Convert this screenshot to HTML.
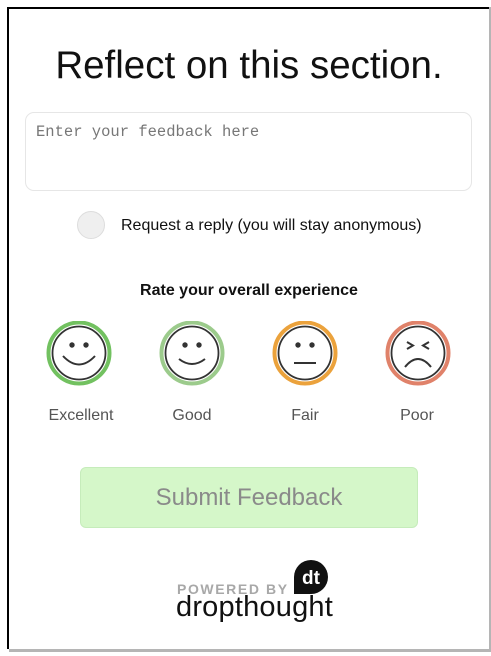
<!DOCTYPE html>
<html><head><style>
body{margin:0;width:491px;height:656px;background:#fff;font-family:"Liberation Sans",sans-serif;position:relative;overflow:hidden}
.frame{position:absolute;left:7px;top:7px;width:482px;height:642px;border-top:2px solid #000;border-left:2px solid #000;box-sizing:border-box}
.rs{position:absolute;left:489px;top:7px;width:2px;height:644px;background:#b5b5b5}
.bs{position:absolute;left:9px;top:649px;width:482px;height:3px;background:#b5b5b5}
h1{position:absolute;top:44px;left:9px;width:480px;margin:0;text-align:center;font-weight:normal;font-size:38.5px;color:#111}
.ta{position:absolute;left:25px;top:112px;width:447px;height:79px;border:1px solid #e6e6e6;border-radius:9px;box-sizing:border-box;font-family:"Liberation Mono",monospace;font-size:15.5px;color:#777;padding:10px 10px}
.cb{position:absolute;left:77px;top:211px;width:28px;height:28px;border-radius:50%;background:#efefef;border:1px solid #ddd;box-sizing:border-box}
.rq{position:absolute;left:121px;top:217px;font-size:16px;color:#111}
.rt{position:absolute;top:282px;left:9px;width:480px;text-align:center;font-weight:bold;font-size:16px;color:#111}
.face{position:absolute;top:321px}
.lbl{position:absolute;top:407px;font-size:16px;color:#555;width:100px;text-align:center}
.btn{position:absolute;left:80px;top:467px;width:338px;height:61px;background:#d5f7c9;border:1px solid #c6ecbb;border-radius:6px;box-sizing:border-box;text-align:center;line-height:59px;font-size:24px;color:#8a8a8a}
.pw{position:absolute;left:177px;top:581px;font-size:14px;letter-spacing:1.6px;color:#a8a8a8;font-weight:bold}
.dt{position:absolute;left:176px;top:591px;font-size:29px;color:#111;letter-spacing:0.2px}
</style></head><body>
<div class="frame"></div><div class="rs"></div><div class="bs"></div>
<h1>Reflect on this section.</h1>
<div class="ta">Enter your feedback here</div>
<div class="cb"></div>
<div class="rq">Request a reply (you will stay anonymous)</div>
<div class="rt">Rate your overall experience</div>

<svg class="face" style="left:46px" width="66" height="66" viewBox="0 0 66 66"><circle cx="33" cy="32" r="30.5" fill="none" stroke="#72c160" stroke-width="4"/><circle cx="33" cy="32" r="26.5" fill="#fff" stroke="#333" stroke-width="1.8"/><circle cx="26" cy="24" r="2.7" fill="#333"/><circle cx="40" cy="24" r="2.7" fill="#333"/><path d="M17 35 Q33 52 49 35" fill="none" stroke="#333" stroke-width="2"/></svg>
<svg class="face" style="left:159px" width="66" height="66" viewBox="0 0 66 66"><circle cx="33" cy="32" r="30.5" fill="none" stroke="#9ccb8c" stroke-width="4"/><circle cx="33" cy="32" r="26.5" fill="#fff" stroke="#333" stroke-width="1.8"/><circle cx="26" cy="24" r="2.7" fill="#333"/><circle cx="40" cy="24" r="2.7" fill="#333"/><path d="M20 38 Q33 48 46 38" fill="none" stroke="#333" stroke-width="2"/></svg>
<svg class="face" style="left:272px" width="66" height="66" viewBox="0 0 66 66"><circle cx="33" cy="32" r="30.5" fill="none" stroke="#eba23c" stroke-width="4"/><circle cx="33" cy="32" r="26.5" fill="#fff" stroke="#333" stroke-width="1.8"/><circle cx="26" cy="24" r="2.7" fill="#333"/><circle cx="40" cy="24" r="2.7" fill="#333"/><path d="M22 42 H44" stroke="#333" stroke-width="2"/></svg>
<svg class="face" style="left:385px" width="66" height="66" viewBox="0 0 66 66"><circle cx="33" cy="32" r="30.5" fill="none" stroke="#e0826a" stroke-width="4"/><circle cx="33" cy="32" r="26.5" fill="#fff" stroke="#333" stroke-width="1.8"/><path d="M22 21 L28 24.5 L22 28 M44 21 L38 24.5 L44 28" fill="none" stroke="#333" stroke-width="2"/><path d="M20 46 Q33 30 46 46" fill="none" stroke="#333" stroke-width="2"/></svg>

<div class="lbl" style="left:31px">Excellent</div>
<div class="lbl" style="left:142px">Good</div>
<div class="lbl" style="left:255px">Fair</div>
<div class="lbl" style="left:367px">Poor</div>

<div class="btn">Submit Feedback</div>
<div class="pw">POWERED BY</div>
<svg style="position:absolute;left:294px;top:560px" width="34" height="34" viewBox="0 0 34 34"><path d="M0 34 V17 A17 17 0 1 1 17 34 Z" fill="#111"/><text x="17" y="24" text-anchor="middle" font-family="Liberation Sans,sans-serif" font-weight="bold" font-size="19" fill="#fff">dt</text></svg>
<div class="dt">dropthought</div>
</body></html>
